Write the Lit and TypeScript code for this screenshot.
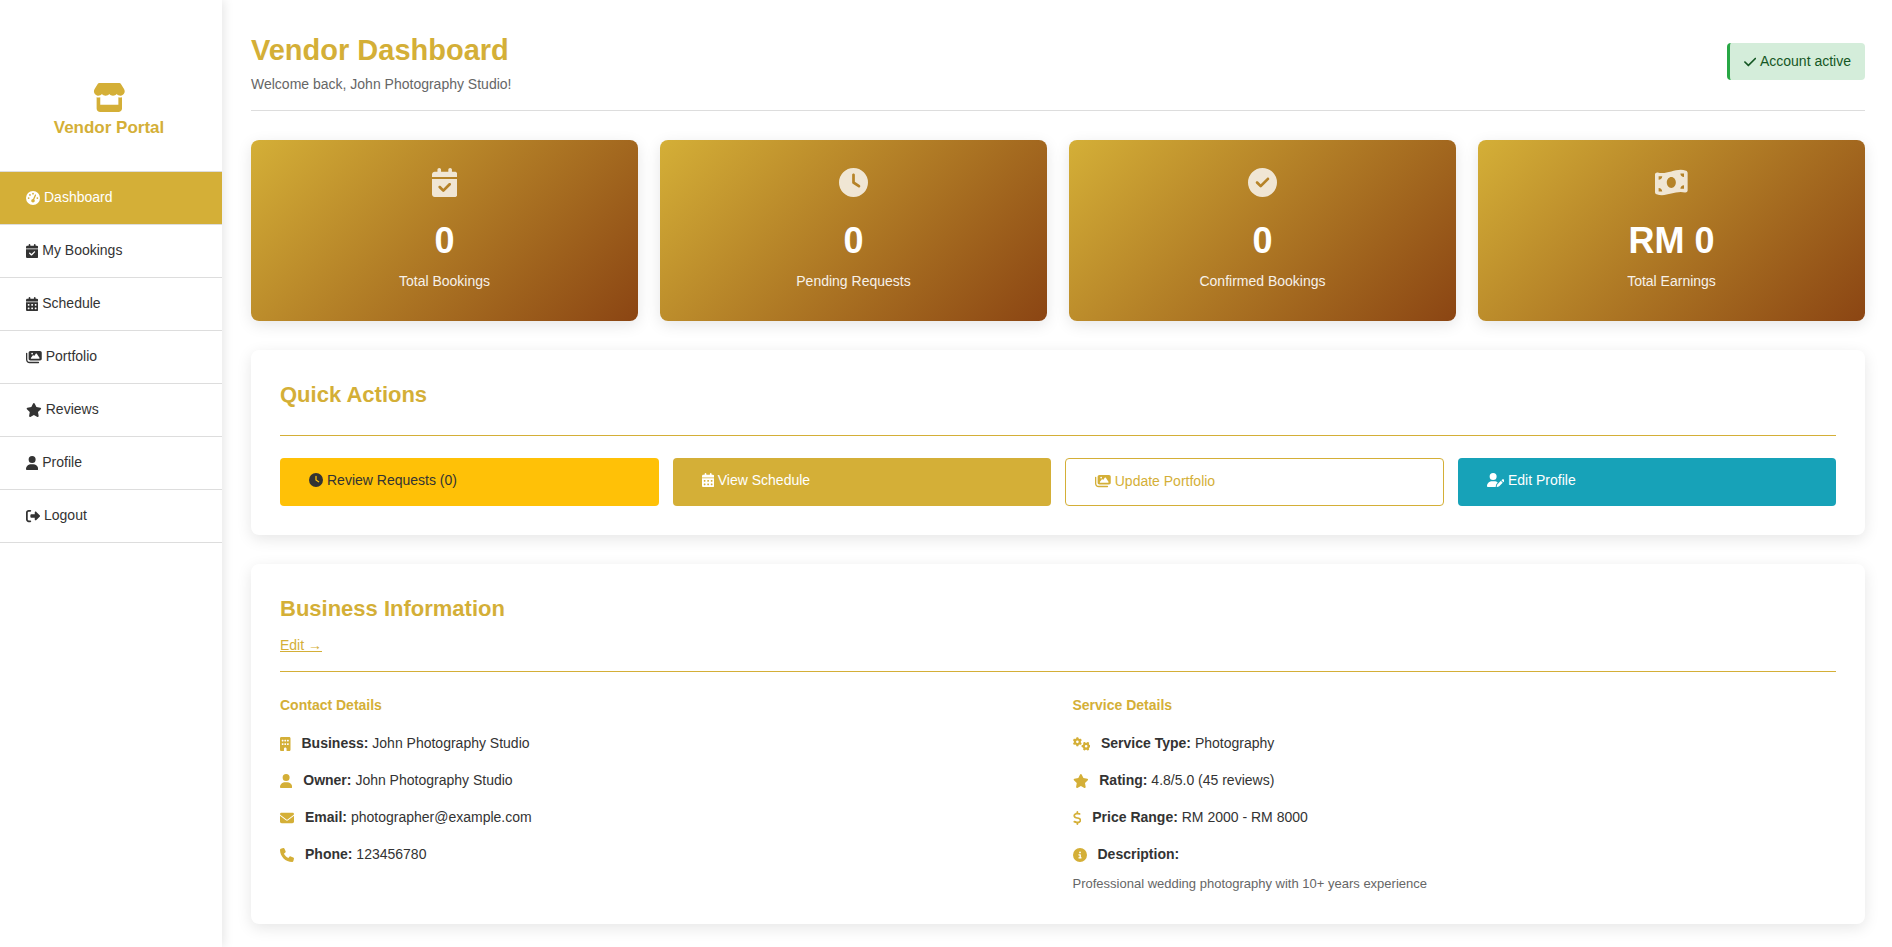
import { LitElement, html, css, svg, nothing } from "lit";
import { customElement, property, state } from "lit/decorators.js";
import { classMap } from "lit/directives/class-map.js";

type Glyph = { width: number; paths: { d: string; transform?: string }[] };

const calendarBody =
  "M128 0c17.7 0 32 14.3 32 32V64H288V32c0-17.7 14.3-32 32-32s32 14.3 32 32V64h48c26.5 0 48 21.5 48 48v48H0V112C0 85.5 21.5 64 48 64H96V32c0-17.7 14.3-32 32-32zM0 192H448V464c0 26.5-21.5 48-48 48H48c-26.5 0-48-21.5-48-48V192z";
const userHead = "M224 256A128 128 0 1 0 224 0a128 128 0 1 0 0 256z";
const disc = "M256 512A256 256 0 1 0 256 0a256 256 0 1 0 0 512z";
const gear =
  "M308.5 135.3c7.1-6.3 9.9-16.2 6.2-25c-2.3-5.3-4.8-10.5-7.6-15.5L304 89.4c-3-5-6.3-9.9-9.8-14.6c-5.7-7.6-15.7-10.1-24.7-7.1l-28.2 9.3c-10.7-8.8-23-16-36.2-20.9L199 27.1c-1.9-9.3-9.1-16.7-18.5-17.8C173.9 8.4 167.2 8 160.4 8h-.7c-6.8 0-13.5 .4-20.1 1.2c-9.4 1.1-16.6 8.6-18.5 17.8L115 56.1c-13.3 5-25.5 12.1-36.2 20.9L50.5 67.8c-9-3-19-.5-24.7 7.1c-3.5 4.7-6.8 9.6-9.9 14.6l-3 5.3c-2.8 5-5.3 10.2-7.6 15.6c-3.7 8.7-.9 18.6 6.2 25l22.2 19.8C32.6 161.9 32 168.9 32 176s.6 14.1 1.7 20.9L11.5 216.7c-7.1 6.3-9.9 16.2-6.2 25c2.3 5.3 4.8 10.5 7.6 15.6l3 5.2c3 5.1 6.3 9.9 9.9 14.6c5.7 7.6 15.7 10.1 24.7 7.1l28.2-9.3c10.7 8.8 23 16 36.2 20.9l6.1 29.1c1.9 9.3 9.1 16.7 18.5 17.8c6.7 .8 13.5 1.2 20.4 1.2s13.7-.4 20.4-1.2c9.4-1.1 16.6-8.6 18.5-17.8l6.1-29.1c13.3-5 25.5-12.1 36.2-20.9l28.2 9.3c9 3 19 .5 24.7-7.1c3.5-4.7 6.8-9.5 9.8-14.6l3.1-5.4c2.8-5 5.3-10.2 7.6-15.5c3.7-8.7 .9-18.6-6.2-25l-22.2-19.8c1.1-6.8 1.7-13.8 1.7-20.9s-.6-14.1-1.7-20.9l22.2-19.8zM112 176a48 48 0 1 1 96 0 48 48 0 1 1 -96 0z";

// Rounded 64-unit squares: day cells of the calendar, windows of the building.
const cells = (xs: number[], ys: number[]) =>
  ys
    .flatMap((y) =>
      xs.map(
        (x) =>
          `M${x} ${y + 16}v32c0 8.8 7.2 16 16 16h32c8.8 0 16-7.2 16-16v-32c0-8.8-7.2-16-16-16h-32c-8.8 0-16 7.2-16 16z`
      )
    )
    .join("");

const one = (width: number, d: string): Glyph => ({ width, paths: [{ d }] });

const glyphs: Record<string, Glyph> = {
  store: one(
    576,
    "M547.6 103.8L490.3 13.1C485.2 5 476.1 0 466.4 0H109.6C99.9 0 90.8 5 85.7 13.1L28.3 103.8c-29.6 46.8-3.4 111.9 51.9 119.4c4 .5 8.1 .8 12.1 .8c26.1 0 49.3-11.4 65.2-29c15.9 17.6 39.1 29 65.2 29c26.1 0 49.3-11.4 65.2-29c15.9 17.6 39.1 29 65.2 29c26.2 0 49.3-11.4 65.2-29c16 17.6 39.1 29 65.2 29c4.1 0 8.1-.3 12.1-.8c55.5-7.4 81.8-72.5 52.1-119.4zM499.7 254.9l-.1 0c-5.3 .7-10.7 1.1-16.2 1.1c-12.4 0-24.3-1.9-35.4-5.3V384H128V250.6c-11.2 3.5-23.2 5.4-35.6 5.4c-5.5 0-11-.4-16.3-1.1l-.1 0c-4.1-.6-8.1-1.3-12-2.3V384v64c0 35.3 28.7 64 64 64H448c35.3 0 64-28.7 64-64V384 252.6c-4 1-8 1.8-12.3 2.3z"
  ),
  gauge: one(
    512,
    "M0 256a256 256 0 1 1 512 0A256 256 0 1 1 0 256zM288 96a32 32 0 1 0 -64 0 32 32 0 1 0 64 0zM256 416c35.3 0 64-28.7 64-64c0-17.4-6.9-33.1-18.1-44.6L366 161.7c5.3-12.1-.2-26.3-12.3-31.6s-26.3 .2-31.6 12.3L257.9 288c-.6 0-1.3 0-1.9 0c-35.3 0-64 28.7-64 64s28.7 64 64 64zM176 144a32 32 0 1 0 -64 0 32 32 0 1 0 64 0zM96 288a32 32 0 1 0 0-64 32 32 0 1 0 0 64zm352-32a32 32 0 1 0 -64 0 32 32 0 1 0 64 0z"
  ),
  calendarCheck: one(
    448,
    calendarBody +
      "M329 305c9.4-9.4 9.4-24.6 0-33.9s-24.6-9.4-33.9 0l-95 95-47-47c-9.4-9.4-24.6-9.4-33.9 0s-9.4 24.6 0 33.9l64 64c9.4 9.4 24.6 9.4 33.9 0L329 305z"
  ),
  calendar: one(448, calendarBody + cells([64, 192, 320], [256, 384])),
  images: one(
    576,
    "M160 32c-35.3 0-64 28.7-64 64V320c0 35.3 28.7 64 64 64H512c35.3 0 64-28.7 64-64V96c0-35.3-28.7-64-64-64H160zM396 138.7l96 144c4.9 7.4 5.4 16.8 1.2 24.6S480.9 320 472 320H328 280 200c-9.2 0-17.6-5.3-21.6-13.6s-2.9-18.2 2.9-25.4l64-80c4.6-5.7 11.4-9 18.7-9s14.2 3.3 18.7 9l17.3 21.6 56-84C360.5 132 368 128 376 128s15.5 4 20 10.7zM192 128a32 32 0 1 1 64 0 32 32 0 1 1 -64 0zM48 120c0-13.3-10.7-24-24-24S0 106.7 0 120V344c0 75.1 60.9 136 136 136H456c13.3 0 24-10.7 24-24s-10.7-24-24-24H136c-48.6 0-88-39.4-88-88V120z"
  ),
  star: one(
    576,
    "M316.9 18C311.6 7 300.4 0 288.1 0s-23.4 7-28.8 18L195 150.3 51.4 171.5c-12 1.8-22 10.2-25.7 21.7s-.7 24.2 7.9 32.7L137.8 329 113.2 474.7c-2 12 3 24.2 12.9 31.3s23 8 33.8 2.3l128.3-68.5 128.3 68.5c10.8 5.7 23.9 4.9 33.8-2.3s14.9-19.3 12.9-31.3L438.5 329 542.7 225.9c8.6-8.5 11.7-21.2 7.9-32.7s-13.7-19.9-25.7-21.7L381.2 150.3 316.9 18z"
  ),
  user: one(
    448,
    userHead +
      "M178.3 304C79.8 304 0 383.8 0 482.3C0 498.7 13.3 512 29.7 512H418.3c16.4 0 29.7-13.3 29.7-29.7C448 383.8 368.2 304 269.7 304H178.3z"
  ),
  userPen: one(
    640,
    userHead +
      "M178.3 304C79.8 304 0 383.8 0 482.3C0 498.7 13.3 512 29.7 512H322.8c-3.1-8.8-3.7-18.4-1.4-27.8l15-60.1c2.8-11.3 8.6-21.5 16.8-29.7l40.3-40.3c-32.1-31-75.7-50.1-123.9-50.1H178.3zm435.5-68.3c-15.6-15.6-40.9-15.6-56.6 0l-29.4 29.4 71 71 29.4-29.4c15.6-15.6 15.6-40.9 0-56.6l-14.4-14.4zM375.9 417c-4.1 4.1-7 9.2-8.4 14.9l-15 60.1c-1.4 5.5 .2 11.2 4.2 15.2s9.7 5.6 15.2 4.2l60.1-15c5.6-1.4 10.8-4.3 14.9-8.4L576.1 358.7l-71-71L375.9 417z"
  ),
  logout: one(
    512,
    "M377.9 105.9L500.7 228.7c7.2 7.2 11.3 17.1 11.3 27.3s-4.1 20.1-11.3 27.3L377.9 406.1c-6.4 6.4-15 9.9-24 9.9c-18.7 0-33.9-15.2-33.9-33.9l0-62.1-128 0c-17.7 0-32-14.3-32-32l0-64c0-17.7 14.3-32 32-32l128 0 0-62.1c0-18.7 15.2-33.9 33.9-33.9c9 0 17.6 3.6 24 9.9zM160 96L96 96c-17.7 0-32 14.3-32 32l0 256c0 17.7 14.3 32 32 32l64 0c17.7 0 32 14.3 32 32s-14.3 32-32 32l-64 0c-53 0-96-43-96-96L0 128C0 75 43 32 96 32l64 0c17.7 0 32 14.3 32 32s-14.3 32-32 32z"
  ),
  check: one(
    448,
    "M438.6 105.4c12.5 12.5 12.5 32.8 0 45.3l-256 256c-12.5 12.5-32.8 12.5-45.3 0l-128-128c-12.5-12.5-12.5-32.8 0-45.3s32.8-12.5 45.3 0L160 338.7 393.4 105.4c12.5-12.5 32.8-12.5 45.3 0z"
  ),
  clock: one(
    512,
    disc +
      "M232 120V256c0 8 4 15.5 10.7 20l96 64c11 7.4 25.9 4.4 33.3-6.7s4.4-25.9-6.7-33.3L280 243.2V120c0-13.3-10.7-24-24-24s-24 10.7-24 24z"
  ),
  circleCheck: one(
    512,
    disc +
      "M369 209L241 337c-9.4 9.4-24.6 9.4-33.9 0l-64-64c-9.4-9.4-9.4-24.6 0-33.9s24.6-9.4 33.9 0l47 47L335 175c9.4-9.4 24.6-9.4 33.9 0s9.4 24.6 0 33.9z"
  ),
  info: one(
    512,
    disc +
      "M216 336h24V272H216c-13.3 0-24-10.7-24-24s10.7-24 24-24h48c13.3 0 24 10.7 24 24v88h8c13.3 0 24 10.7 24 24s-10.7 24-24 24H216c-13.3 0-24-10.7-24-24s10.7-24 24-24zm40-208a32 32 0 1 1 0 64 32 32 0 1 1 0-64z"
  ),
  money: one(
    576,
    "M0 112.5V422.3c0 18 10.1 35 27 41.3c87 32.5 174 10.3 261-11.9c79.8-20.3 159.6-40.7 239.3-18.9c23 6.3 48.7-9.5 48.7-33.4V89.7c0-18-10.1-35-27-41.3C462 15.9 375 38.1 288 60.3C208.2 80.6 128.4 100.9 48.7 79.1C25.6 72.8 0 88.6 0 112.5zM288 352c-44.2 0-80-43-80-96s35.8-96 80-96s80 43 80 96s-35.8 96-80 96zM64 352c35.3 0 64 28.7 64 64H64V352zm64-208c0 35.3-28.7 64-64 64V144h64zM512 304v64H448c0-35.3 28.7-64 64-64zM448 96h64v64c-35.3 0-64-28.7-64-64z"
  ),
  building: one(
    384,
    "M48 0C21.5 0 0 21.5 0 48V464c0 26.5 21.5 48 48 48h96V432c0-26.5 21.5-48 48-48s48 21.5 48 48v80h96c26.5 0 48-21.5 48-48V48c0-26.5-21.5-48-48-48H48z" +
      cells([64, 160, 256], [96, 224])
  ),
  envelope: one(
    512,
    "M48 64C21.5 64 0 85.5 0 112c0 15.1 7.1 29.3 19.2 38.4L236.8 313.6c11.4 8.5 27 8.5 38.4 0L492.8 150.4c12.1-9.1 19.2-23.3 19.2-38.4c0-26.5-21.5-48-48-48H48zM0 176V384c0 35.3 28.7 64 64 64H448c35.3 0 64-28.7 64-64V176L294.4 339.2c-22.8 17.1-54 17.1-76.8 0L0 176z"
  ),
  phone: one(
    512,
    "M164.9 24.6c-7.7-18.6-28-28.5-47.4-23.2l-88 24C12.1 30.2 0 46 0 64C0 311.4 200.6 512 448 512c18 0 33.8-12.1 38.6-29.5l24-88c5.3-19.4-4.6-39.7-23.2-47.4l-96-40c-16.3-6.8-35.2-2.1-46.3 11.6L304.7 368C234.3 334.7 177.3 277.7 144 207.3L193.3 167c13.7-11.2 18.4-30 11.6-46.3l-40-96z"
  ),
  gears: {
    width: 640,
    paths: [{ d: gear }, { d: gear, transform: "translate(656 176) rotate(90)" }],
  },
  dollar: one(
    320,
    "M160 0c17.7 0 32 14.3 32 32V67.7c1.6 .2 3.1 .4 4.7 .7c.4 .1 .7 .1 1.1 .2l48 8.8c17.4 3.2 28.9 19.9 25.7 37.2s-19.9 28.9-37.2 25.7l-47.5-8.7c-31.3-4.6-58.9-1.5-78.3 6.2s-27.2 18.3-29 28.1c-2 10.7-.5 16.7 1.2 20.4c1.8 3.9 5.5 8.3 12.8 13.2c16.3 10.7 41.3 17.7 73.7 26.3l2.9 .8c28.6 7.6 63.6 16.8 89.6 33.8c14.2 9.3 27.6 21.9 35.9 39.5c8.5 17.9 10.3 37.9 6.4 59.2c-6.9 38-33.1 63.4-65.6 76.7c-13.7 5.6-28.6 9.2-44.4 11V480c0 17.7-14.3 32-32 32s-32-14.3-32-32V445.1c-.4-.1-.9-.1-1.3-.2c-24.4-3.8-64.5-14.3-91.5-26.3c-16.1-7.2-23.4-26.1-16.2-42.2s26.1-23.4 42.2-16.2c20.9 9.3 55.3 18.5 75.2 21.6c31.9 4.7 58.2 2 76-5.3c16.9-6.9 24.6-16.9 26.8-28.9c1.9-10.6 .4-16.7-1.3-20.4c-1.9-4-5.6-8.4-13-13.3c-16.4-10.7-41.5-17.7-74-26.3l-2.8-.7C119.4 279.3 84.4 270 58.4 253c-14.2-9.3-27.5-22-35.8-39.6c-8.4-17.9-10.1-37.9-6.1-59.2C23.7 116 52.3 91.2 84.8 78.3c13.3-5.3 27.9-8.9 43.2-11V32c0-17.7 14.3-32 32-32z"
  ),
};

const icon = (name: string, cls = "icon") => {
  const g = glyphs[name];
  return html`<svg class=${cls} viewBox="0 0 ${g.width} 512" aria-hidden="true">
    ${g.paths.map((p) => svg`<path fill-rule="evenodd" d=${p.d} transform=${p.transform ?? nothing}></path>`)}
  </svg>`;
};

const base = css`
  * {
    box-sizing: border-box;
    margin: 0;
  }
  a {
    color: inherit;
    text-decoration: none;
  }
  svg {
    display: block;
    flex: none;
    width: auto;
    fill: currentColor;
  }
  .icon {
    height: 14px;
  }
`;

@customElement("vendor-sidebar")
class VendorSidebar extends LitElement {
  static styles = [
    base,
    css`
      :host {
        display: block;
        background: #fff;
        box-shadow: 2px 0 10px rgba(0, 0, 0, 0.1);
      }
      .brand {
        display: flex;
        flex-direction: column;
        align-items: center;
        gap: 4px;
        padding: 83px 4px 32px 0;
        color: #d4af37;
      }
      .brand-icon {
        height: 29px;
      }
      .brand-name {
        font-size: 17px;
        line-height: 23px;
      }
      .menu {
        list-style: none;
        padding: 0;
        border-top: 1px solid #ddd;
      }
      .entry {
        border-bottom: 1px solid #ddd;
      }
      .link {
        display: flex;
        align-items: center;
        gap: 4px;
        padding: 14px 26px 15px;
      }
      .link.active {
        background: #d4af37;
        color: #fff;
      }
    `,
  ];

  @state() current = "Dashboard";

  private entries = [
    { icon: "gauge", label: "Dashboard" },
    { icon: "calendarCheck", label: "My Bookings" },
    { icon: "calendar", label: "Schedule" },
    { icon: "images", label: "Portfolio" },
    { icon: "star", label: "Reviews" },
    { icon: "user", label: "Profile" },
    { icon: "logout", label: "Logout" },
  ];

  render() {
    return html`
      <div class="brand">
        ${icon("store", "brand-icon")}
        <h3 class="brand-name">Vendor Portal</h3>
      </div>
      <nav>
        <ul class="menu">
          ${this.entries.map(
            (e) => html`<li class="entry">
              <a
                href="#"
                class=${classMap({ link: true, active: e.label === this.current })}
                aria-current=${e.label === this.current ? "page" : nothing}
                >${icon(e.icon)}<span>${e.label}</span></a
              >
            </li>`
          )}
        </ul>
      </nav>
    `;
  }
}

@customElement("stat-card")
class StatCard extends LitElement {
  static styles = [
    base,
    css`
      :host {
        display: flex;
        flex-direction: column;
        align-items: center;
        padding: 28px 22px 29px;
        border-radius: 8px;
        background: linear-gradient(135deg, #d4af37, #8b4513);
        box-shadow: 0 4px 15px rgba(0, 0, 0, 0.1);
        color: #fff;
      }
      .figure {
        height: 29px;
        margin-bottom: 26px;
        opacity: 0.8;
      }
      .value {
        margin-bottom: 11px;
        font-size: 36px;
        font-weight: bold;
        line-height: 36px;
      }
      .label {
        line-height: 22px;
        opacity: 0.9;
      }
    `,
  ];

  @property() icon = "";
  @property() value = "";
  @property() label = "";

  render() {
    return html`
      ${icon(this.icon, "figure")}
      <div class="value">${this.value}</div>
      <div class="label">${this.label}</div>
    `;
  }
}

@customElement("app-root")
class AppRoot extends LitElement {
  static styles = [
    base,
    css`
      :host {
        display: grid;
        grid-template-columns: 222px minmax(0, 1fr);
        min-height: 100vh;
        background: #fff;
        color: #333;
        font: 14px/23px "Liberation Sans", Arial, sans-serif;
      }
      .content {
        display: flex;
        flex-direction: column;
        gap: 29px;
        padding: 29px 27px 23px 29px;
      }
      vendor-sidebar {
        z-index: 1;
      }
      .top {
        display: flex;
        align-items: center;
        justify-content: space-between;
        padding-bottom: 16px;
        border-bottom: 1px solid #ddd;
      }
      .title {
        margin-bottom: 4px;
        color: #d4af37;
        font-size: 29px;
        line-height: 42px;
      }
      .welcome {
        color: #666;
        line-height: 19px;
      }
      .status {
        display: flex;
        align-items: center;
        gap: 4px;
        padding: 7px 14px;
        border-left: 3px solid #28a745;
        border-radius: 4px;
        background: #d4edda;
        color: #155724;
      }
      .stats {
        display: grid;
        grid-template-columns: repeat(4, 1fr);
        gap: 22px;
      }
      .panel {
        padding: 29px;
        border-radius: 8px;
        background: #fff;
        box-shadow: 0 4px 15px rgba(0, 0, 0, 0.1);
      }
      .panel-head {
        display: flex;
        flex-direction: column;
        align-items: flex-start;
        gap: 10px;
        margin-bottom: 22px;
        padding-bottom: 14px;
        border-bottom: 1px solid #d4af37;
        color: #d4af37;
      }
      .panel-head.plain {
        padding-bottom: 25px;
      }
      .panel-title {
        font-size: 22px;
        line-height: 31px;
      }
      .edit {
        text-decoration: underline;
      }
      .actions {
        display: grid;
        grid-template-columns: repeat(4, 1fr);
        gap: 14px;
      }
      .action {
        display: flex;
        align-items: flex-start;
        gap: 4px;
        padding: 11px 29px 12px;
        border-radius: 4px;
        color: #fff;
      }
      .action .icon {
        margin-top: 4px;
      }
      .requests {
        background: #ffc107;
        color: #333;
      }
      .schedule {
        background: #d4af37;
      }
      .portfolio {
        border: 1px solid #d4af37;
        color: #d4af37;
      }
      .profile {
        background: #17a2b8;
      }
      .details {
        display: grid;
        grid-template-columns: repeat(2, 1fr);
        gap: 29px;
      }
      .details-title {
        margin-bottom: 15px;
        color: #d4af37;
        font-size: 14px;
      }
      .rows {
        display: flex;
        flex-direction: column;
        gap: 14px;
      }
      .row {
        display: flex;
        align-items: center;
        gap: 11px;
      }
      .row .icon {
        color: #d4af37;
      }
      .note {
        margin-top: 7px;
        color: #666;
        font-size: 13px;
        line-height: 22px;
      }
    `,
  ];

  private stats = [
    { icon: "calendarCheck", value: "0", label: "Total Bookings" },
    { icon: "clock", value: "0", label: "Pending Requests" },
    { icon: "circleCheck", value: "0", label: "Confirmed Bookings" },
    { icon: "money", value: "RM 0", label: "Total Earnings" },
  ];

  private actions = [
    { kind: "requests", icon: "clock", label: "Review Requests (0)" },
    { kind: "schedule", icon: "calendar", label: "View Schedule" },
    { kind: "portfolio", icon: "images", label: "Update Portfolio" },
    { kind: "profile", icon: "userPen", label: "Edit Profile" },
  ];

  private contact = [
    ["building", "Business:", "John Photography Studio"],
    ["user", "Owner:", "John Photography Studio"],
    ["envelope", "Email:", "photographer@example.com"],
    ["phone", "Phone:", "123456780"],
  ];

  private service = [
    ["gears", "Service Type:", "Photography"],
    ["star", "Rating:", "4.8/5.0 (45 reviews)"],
    ["dollar", "Price Range:", "RM 2000 - RM 8000"],
    ["info", "Description:", ""],
  ];

  private rows(items: string[][]) {
    return html`<div class="rows">
      ${items.map(
        ([name, label, value]) =>
          html`<p class="row">${icon(name)}<span><strong>${label}</strong> ${value}</span></p>`
      )}
    </div>`;
  }

  render() {
    return html`
      <vendor-sidebar></vendor-sidebar>
      <main class="content">
        <header class="top">
          <div>
            <h1 class="title">Vendor Dashboard</h1>
            <p class="welcome">Welcome back, John Photography Studio!</p>
          </div>
          <div class="status" role="status">${icon("check")}<span>Account active</span></div>
        </header>

        <section class="stats">
          ${this.stats.map(
            (s) => html`<stat-card .icon=${s.icon} .value=${s.value} .label=${s.label}></stat-card>`
          )}
        </section>

        <section class="panel">
          <div class="panel-head plain">
            <h2 class="panel-title">Quick Actions</h2>
          </div>
          <div class="actions">
            ${this.actions.map(
              (a) => html`<a href="#" class="action ${a.kind}">${icon(a.icon)}<span>${a.label}</span></a>`
            )}
          </div>
        </section>

        <section class="panel">
          <div class="panel-head">
            <h2 class="panel-title">Business Information</h2>
            <a href="#" class="edit">Edit →</a>
          </div>
          <div class="details">
            <div>
              <h4 class="details-title">Contact Details</h4>
              ${this.rows(this.contact)}
            </div>
            <div>
              <h4 class="details-title">Service Details</h4>
              ${this.rows(this.service)}
              <p class="note">Professional wedding photography with 10+ years experience</p>
            </div>
          </div>
        </section>
      </main>
    `;
  }
}
